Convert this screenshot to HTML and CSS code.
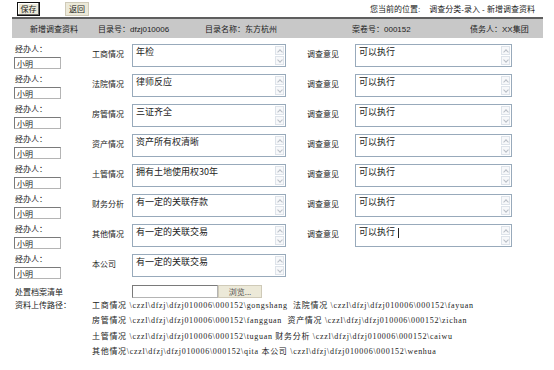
FILE: index.html
```html
<!DOCTYPE html>
<html lang="zh-CN">
<head>
  <meta charset="UTF-8">
  <title>新增调查资料</title>
  <link rel="stylesheet" href="styles.css">
</head>
<body>
<div class="page">

  <!-- top toolbar -->
  <div class="toolbar">
    <div class="buttons">
      <button class="btn btn-default">保存</button>
      <button class="btn">返回</button>
    </div>
    <div class="location">您当前的位置:&nbsp;&nbsp;&nbsp;&nbsp;调查分类-录入 - 新增调查资料</div>
  </div>

  <!-- case info bar -->
  <div class="infobar">
    <span>新增调查资料</span>
    <span>目录号：dfzj010006</span>
    <span>目录名称：东方杭州</span>
    <span>案卷号：000152</span>
    <span>债务人：XX集团</span>
  </div>

  <!-- survey form -->
  <div class="form">
    <div class="agent"><span>经办人：</span><input class="agent-input" value="小明"></div>
    <div class="label">工商情况</div>
    <div class="memo"><textarea>年检</textarea><span class="sb"><i class="up"></i><i class="down"></i></span></div>
    <div class="label label-right">调查意见</div>
    <div class="memo"><textarea>可以执行</textarea><span class="sb"><i class="up"></i><i class="down"></i></span></div>

    <div class="agent"><span>经办人：</span><input class="agent-input" value="小明"></div>
    <div class="label">法院情况</div>
    <div class="memo"><textarea>律师反应</textarea><span class="sb"><i class="up"></i><i class="down"></i></span></div>
    <div class="label label-right">调查意见</div>
    <div class="memo"><textarea>可以执行</textarea><span class="sb"><i class="up"></i><i class="down"></i></span></div>

    <div class="agent"><span>经办人：</span><input class="agent-input" value="小明"></div>
    <div class="label">房管情况</div>
    <div class="memo"><textarea>三证齐全</textarea><span class="sb"><i class="up"></i><i class="down"></i></span></div>
    <div class="label label-right">调查意见</div>
    <div class="memo"><textarea>可以执行</textarea><span class="sb"><i class="up"></i><i class="down"></i></span></div>

    <div class="agent"><span>经办人：</span><input class="agent-input" value="小明"></div>
    <div class="label">资产情况</div>
    <div class="memo"><textarea>资产所有权清晰</textarea><span class="sb"><i class="up"></i><i class="down"></i></span></div>
    <div class="label label-right">调查意见</div>
    <div class="memo"><textarea>可以执行</textarea><span class="sb"><i class="up"></i><i class="down"></i></span></div>

    <div class="agent"><span>经办人：</span><input class="agent-input" value="小明"></div>
    <div class="label">土管情况</div>
    <div class="memo"><textarea>拥有土地使用权30年</textarea><span class="sb"><i class="up"></i><i class="down"></i></span></div>
    <div class="label label-right">调查意见</div>
    <div class="memo"><textarea>可以执行</textarea><span class="sb"><i class="up"></i><i class="down"></i></span></div>

    <div class="agent"><span>经办人：</span><input class="agent-input" value="小明"></div>
    <div class="label">财务分析</div>
    <div class="memo"><textarea>有一定的关联存款</textarea><span class="sb"><i class="up"></i><i class="down"></i></span></div>
    <div class="label label-right">调查意见</div>
    <div class="memo"><textarea>可以执行</textarea><span class="sb"><i class="up"></i><i class="down"></i></span></div>

    <div class="agent"><span>经办人：</span><input class="agent-input" value="小明"></div>
    <div class="label">其他情况</div>
    <div class="memo"><textarea>有一定的关联交易</textarea><span class="sb"><i class="up"></i><i class="down"></i></span></div>
    <div class="label label-right">调查意见</div>
    <div class="memo"><textarea>可以执行</textarea><span class="caret"></span><span class="sb"><i class="up"></i><i class="down"></i></span></div>

    <div class="agent"><span>经办人：</span><input class="agent-input" value="小明"></div>
    <div class="label">本公司</div>
    <div class="memo"><textarea>有一定的关联交易</textarea><span class="sb"><i class="up"></i><i class="down"></i></span></div>

    <!-- file list -->
    <div class="row-label">处置档案清单</div>
    <div class="file">
      <input class="file-path" value="">
      <button class="btn btn-browse">浏览...</button>
    </div>

    <!-- upload paths -->
    <div class="row-label path-label">资料上传路径：</div>
    <div class="paths">
      <div>工商情况 \czzl\dfzj\dfzj010006\000152\gongshang&nbsp;&nbsp;法院情况 \czzl\dfzj\dfzj010006\000152\fayuan</div>
      <div>房管情况 \czzl\dfzj\dfzj010006\000152\fangguan&nbsp;&nbsp;资产情况 \czzl\dfzj\dfzj010006\000152\zichan</div>
      <div>土管情况 \czzl\dfzj\dfzj010006\000152\tuguan 财务分析 \czzl\dfzj\dfzj010006\000152\caiwu</div>
      <div>其他情况\czzl\dfzj\dfzj010006\000152\qita 本公司 \czzl\dfzj\dfzj010006\000152\wenhua</div>
    </div>
  </div>

</div>
</body>
</html>
```

FILE: styles.css
```css
* {
  margin: 0;
  padding: 0;
  box-sizing: border-box;
}

body {
  font-family: "Liberation Sans", "Noto Sans CJK SC", sans-serif;
  font-size: 8px;
  color: #222;
  background: #fff;
}

.page {
  width: 531px;
  margin-left: 12px;
}

/* toolbar */
.toolbar {
  display: flex;
  justify-content: space-between;
  align-items: flex-start;
  height: 19px;
  padding: 2px 8px 0 5px;
  border-bottom: 2px solid #5e5e5e;
}

.buttons {
  display: flex;
  gap: 25px;
}

.btn {
  height: 14px;
  width: 24px;
  font-family: "Noto Sans CJK SC", sans-serif;
  font-size: 8px;
  line-height: 12px;
  color: #222;
  background: #ece9d8;
  border: 1px solid #cfcab8;
}

.btn-default {
  width: 23px;
  border: 1px solid #111;
  box-shadow: inset -1px -1px #6b6b6b, inset 1px 1px #fff;
}

.location {
  margin-top: 2px;
  line-height: 12px;
}

/* info bar */
.infobar {
  display: grid;
  grid-template-columns: 68px 107px 147px 118px 1fr;
  align-items: center;
  height: 19px;
  padding-left: 18px;
  background: #c8c8c8;
}

/* form */
.form {
  display: grid;
  grid-template-columns: 78px 40px 154px 69px 157px;
  grid-template-rows: repeat(8, 30px) 14px auto;
  margin-top: 6px;
  padding-left: 2px;
}

.agent {
  display: flex;
  flex-direction: column;
  align-items: flex-start;
}

.agent span {
  line-height: 12px;
  padding-left: 1px;
}

.agent-input {
  margin-top: 1px;
  width: 47px;
  height: 12px;
  padding: 0 2px;
  font-family: "Noto Sans CJK SC", sans-serif;
  font-size: 8px;
  color: #222;
  border: 1px solid #b4b4b4;
  border-top-color: #7a7a7a;
  border-left-color: #7a7a7a;
}

.label {
  align-self: start;
  line-height: 21px;
  white-space: nowrap;
}

.label-right {
  padding-left: 21px;
}

.memo {
  position: relative;
  display: flex;
  height: 23px;
  border: 1px solid #98aabb;
  background: #fff;
}

.memo textarea {
  flex: 1;
  border: none;
  resize: none;
  overflow: hidden;
  padding: 1px 3px;
  font-family: "Noto Sans CJK SC", sans-serif;
  font-size: 9px;
  line-height: 11px;
  color: #222;
  outline: none;
}

.caret {
  position: absolute;
  left: 42px;
  top: 3px;
  width: 1px;
  height: 10px;
  background: #222;
}

/* fake scrollbar */
.sb {
  display: flex;
  flex-direction: column;
  justify-content: space-between;
  width: 10px;
  padding: 1px 1px 1px 0;
}

.sb i {
  position: relative;
  display: block;
  width: 9px;
  height: 9px;
  border: 1px solid #dde3ea;
  background: #f7f8fa;
}

.sb i::after {
  content: "";
  position: absolute;
  left: 2px;
  width: 3px;
  height: 3px;
  border-top: 1px solid #b8bec6;
  border-left: 1px solid #b8bec6;
}

.sb .up::after {
  top: 3px;
  transform: rotate(45deg);
}

.sb .down::after {
  top: 1px;
  transform: rotate(225deg);
}

/* bottom rows */
.row-label {
  grid-column: 1 / 3;
  align-self: center;
  padding-left: 1px;
}

.file {
  grid-column: 3;
  display: flex;
  align-self: center;
  height: 13px;
}

.file-path {
  width: 86px;
  height: 13px;
  border: 1px solid #b4b4b4;
  border-top-color: #7a7a7a;
  border-left-color: #7a7a7a;
}

.btn-browse {
  width: 44px;
  height: 13px;
  line-height: 11px;
  color: #555;
}

.path-label {
  grid-column: 1;
  align-self: start;
  line-height: 15.3px;
}

.paths {
  grid-column: 2 / -1;
  font-family: "Liberation Serif", "Noto Sans CJK SC", serif;
  font-size: 8px;
  line-height: 15.3px;
  letter-spacing: 0.7px;
  white-space: nowrap;
}
```
